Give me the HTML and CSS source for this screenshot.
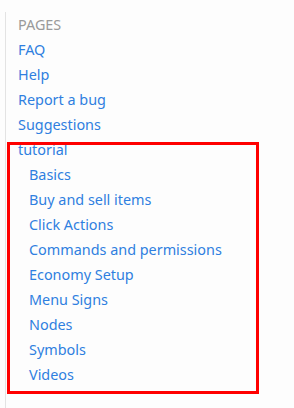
FILE: index.html
```html
<!DOCTYPE html>
<html lang="en">
<head>
    <meta charset="UTF-8">
    <meta name="viewport" content="width=device-width, initial-scale=1.0">
    <title>Pages</title>
    <link rel="stylesheet" href="styles.css">
</head>
<body>

    <nav class="sidebar">
        <div class="title">PAGES</div>
        <ul class="pages">
            <li><a href="#">FAQ</a></li>
            <li><a href="#">Help</a></li>
            <li><a href="#">Report a bug</a></li>
            <li><a href="#">Suggestions</a></li>
            <li class="group">
                <a href="#">tutorial</a>
                <ul class="sub">
                    <li><a href="#">Basics</a></li>
                    <li><a href="#">Buy and sell items</a></li>
                    <li><a href="#">Click Actions</a></li>
                    <li><a href="#">Commands and permissions</a></li>
                    <li><a href="#">Economy Setup</a></li>
                    <li><a href="#">Menu Signs</a></li>
                    <li><a href="#">Nodes</a></li>
                    <li><a href="#">Symbols</a></li>
                    <li><a href="#">Videos</a></li>
                </ul>
            </li>
        </ul>
    </nav>

</body>
</html>
```

FILE: styles.css
```css
* {
    margin: 0;
    padding: 0;
    box-sizing: border-box;
}

body {
    font-family: "Noto Sans", "Open Sans", sans-serif;
    font-size: 14.4px;
    line-height: 25px;
    background-color: #fdfdfd;
    height: 408px;
    overflow: hidden;
}

.sidebar {
    margin-left: 5px;
    margin-top: 12px;
    padding-left: 12px;
    border-left: 1px solid #e3e3e3;
    height: 396px;
}

.title {
    color: #9a9a9a;
}

.pages {
    list-style: none;
}

.pages a {
    color: #2f7fe0;
    text-decoration: none;
}

.sub {
    list-style: none;
    padding-left: 11px;
}

/* red highlight drawn over the tutorial group */
.group {
    position: relative;
}

.group::after {
    content: "";
    position: absolute;
    left: -11px;
    top: 5px;
    width: 252px;
    height: 252px;
    box-sizing: border-box;
    border: 3px solid #ff0000;
}
```
